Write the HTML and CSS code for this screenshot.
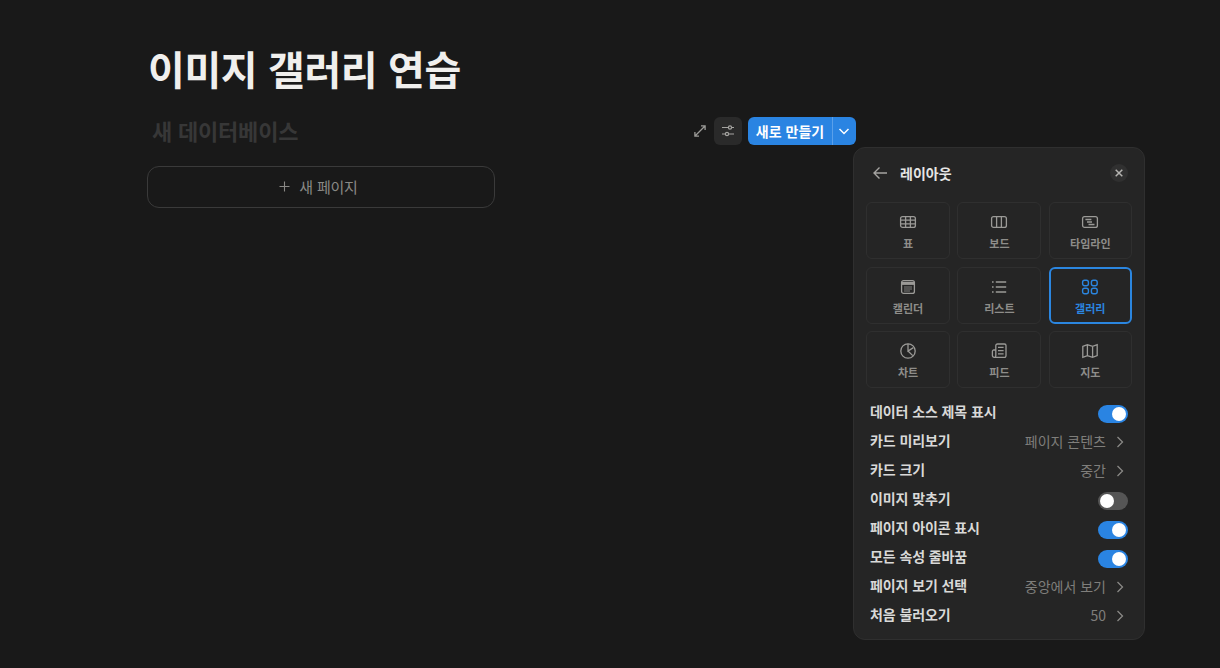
FILE: index.html
```html
<!DOCTYPE html>
<html lang="ko">
<head>
<meta charset="utf-8">
<title>이미지 갤러리 연습</title>
<link rel="stylesheet" href="styles.css">
</head>
<body>
<main class="page">
  <h1 class="title">이미지 갤러리 연습</h1>
  <div class="toolbar">
    <div class="db-name">새 데이터베이스</div>
    <div class="actions">
      <button class="icon-btn"><svg width="14" height="14" viewBox="0 0 14 14" fill="none" stroke="#9b9a97" stroke-width="1.3"><path d="M2.5 11.5l9-9M8 1.9h4.1V6M6 12.1H1.9V8"/></svg></button>
      <button class="icon-btn filled"><svg width="16" height="16" viewBox="0 0 16 16" fill="none" stroke="#a5a4a1" stroke-width="1.2"><path d="M2 4.5h12M2 11h12"/><circle cx="10" cy="4.5" r="1.6" fill="#2a2a2a"/><circle cx="7" cy="11" r="1.6" fill="#2a2a2a"/></svg></button>
      <div class="new-btn">
        <span class="new-label">새로 만들기</span>
        <span class="new-caret"><svg width="12" height="12" viewBox="0 0 12 12" fill="none" stroke="#fff" stroke-width="1.5"><path d="M1.5 4l4.5 4.5L10.5 4"/></svg></span>
      </div>
    </div>
  </div>
  <button class="new-page"><svg width="11" height="11" viewBox="0 0 11 11" stroke="#8a8986" stroke-width="1.1"><path d="M5.5.5v10M.5 5.5h10"/></svg><span>새 페이지</span></button>
</main>

<aside class="panel">
  <header class="panel-head">
    <svg class="back" width="16" height="16" viewBox="0 0 16 16" fill="none" stroke="#a5a4a1" stroke-width="1.4"><path d="M15 8H2M7.5 2.5 2 8l5.5 5.5"/></svg>
    <span class="panel-title">레이아웃</span>
    <span class="close"><svg width="8" height="8" viewBox="0 0 8 8" stroke="#b5b4b1" stroke-width="1.5"><path d="M.7.7l6.6 6.6M7.3.7.7 7.3"/></svg></span>
  </header>

  <div class="layouts">
    <div class="tile">
      <svg width="18" height="18" viewBox="0 0 18 18" fill="none" stroke="#9b9a97" stroke-width="1.3"><rect x="1.6" y="3.6" width="14.8" height="10.8" rx="2"/><path d="M1.6 7.2h14.8M1.6 10.8h14.8M6.6 3.6v10.8M11.4 3.6v10.8"/></svg>
      <span>표</span>
    </div>
    <div class="tile">
      <svg width="18" height="18" viewBox="0 0 18 18" fill="none" stroke="#9b9a97" stroke-width="1.3"><rect x="1.6" y="3.6" width="14.8" height="10.8" rx="2"/><path d="M6.6 3.6v10.8M11.4 3.6v10.8"/></svg>
      <span>보드</span>
    </div>
    <div class="tile">
      <svg width="18" height="18" viewBox="0 0 18 18" fill="none" stroke="#9b9a97" stroke-width="1.3"><rect x="1.6" y="3.6" width="14.8" height="10.8" rx="2"/><path d="M4.4 6.5h6M6 9h5M7.5 11.5h6"/></svg>
      <span>타임라인</span>
    </div>
    <div class="tile">
      <svg width="18" height="18" viewBox="0 0 18 18" fill="none" stroke="#9b9a97" stroke-width="1.3"><rect x="2.6" y="2.6" width="12.8" height="12.8" rx="2"/><path d="M2.6 5.4h12.8" stroke-width="3"/><path d="M5.5 9h7M5.5 11h7M5.5 13h5" stroke-dasharray="1 1"/></svg>
      <span>캘린더</span>
    </div>
    <div class="tile">
      <svg width="18" height="18" viewBox="0 0 18 18" fill="none" stroke="#9b9a97" stroke-width="1.3"><path d="M5.8 4h10.4M5.8 9h10.4M5.8 14h10.4"/><path d="M2 4h1.6M2 9h1.6M2 14h1.6" stroke-width="1.7"/></svg>
      <span>리스트</span>
    </div>
    <div class="tile active">
      <svg width="18" height="18" viewBox="0 0 18 18" fill="none" stroke="#2b86e0" stroke-width="1.4"><rect x="1.6" y="2.2" width="5.8" height="5.6" rx="2"/><rect x="10.4" y="2.2" width="5.8" height="5.6" rx="2"/><rect x="1.6" y="10.2" width="5.8" height="5.6" rx="2"/><rect x="10.4" y="10.2" width="5.8" height="5.6" rx="2"/></svg>
      <span>갤러리</span>
    </div>
    <div class="tile">
      <svg width="18" height="18" viewBox="0 0 18 18" fill="none" stroke="#9b9a97" stroke-width="1.3"><circle cx="9" cy="9" r="7.2"/><path d="M9 1.8V9l5.4-3.4M9 9l4.8 4.6"/></svg>
      <span>차트</span>
    </div>
    <div class="tile">
      <svg width="18" height="18" viewBox="0 0 18 18" fill="none" stroke="#9b9a97" stroke-width="1.3"><path d="M5 15.4h9.4a1.6 1.6 0 0 0 1.6-1.6V3.6A1.6 1.6 0 0 0 14.4 2H7.4a1.6 1.6 0 0 0-1.6 1.6v10.2a1.6 1.6 0 0 1-1.6 1.6 1.8 1.8 0 0 1-1.8-1.8V9.4a1.4 1.4 0 0 1 1.4-1.4h2.2"/><path d="M8 5.4h5.6M8 8.6h5.6M8 11.8h5.6"/></svg>
      <span>피드</span>
    </div>
    <div class="tile">
      <svg width="18" height="18" viewBox="0 0 18 18" fill="none" stroke="#9b9a97" stroke-width="1.3"><path d="M1.8 4.4 6.4 2.6l5.2 1.8 4.6-1.8v11l-4.6 1.8-5.2-1.8-4.6 1.8zM6.4 2.6v11M11.6 4.4v11"/></svg>
      <span>지도</span>
    </div>
  </div>

  <ul class="settings">
    <li class="row"><span class="label">데이터 소스 제목 표시</span><span class="switch on"></span></li>
    <li class="row"><span class="label">카드 미리보기</span><span class="value">페이지 콘텐츠<svg class="chev" width="8" height="12" viewBox="0 0 8 12" fill="none" stroke="#8a8986" stroke-width="1.3"><path d="M1.5 1l5 5-5 5"/></svg></span></li>
    <li class="row"><span class="label">카드 크기</span><span class="value">중간<svg class="chev" width="8" height="12" viewBox="0 0 8 12" fill="none" stroke="#8a8986" stroke-width="1.3"><path d="M1.5 1l5 5-5 5"/></svg></span></li>
    <li class="row"><span class="label">이미지 맞추기</span><span class="switch"></span></li>
    <li class="row"><span class="label">페이지 아이콘 표시</span><span class="switch on"></span></li>
    <li class="row"><span class="label">모든 속성 줄바꿈</span><span class="switch on"></span></li>
    <li class="row"><span class="label">페이지 보기 선택</span><span class="value">중앙에서 보기<svg class="chev" width="8" height="12" viewBox="0 0 8 12" fill="none" stroke="#8a8986" stroke-width="1.3"><path d="M1.5 1l5 5-5 5"/></svg></span></li>
    <li class="row"><span class="label">처음 불러오기</span><span class="value">50<svg class="chev" width="8" height="12" viewBox="0 0 8 12" fill="none" stroke="#8a8986" stroke-width="1.3"><path d="M1.5 1l5 5-5 5"/></svg></span></li>
  </ul>
</aside>
</body>
</html>
```
FILE: styles.css
```css
* { box-sizing: border-box; }
html, body { margin: 0; height: 100%; }
body {
  background: #191919;
  color: #e6e6e5;
  font-family: "Noto Sans CJK KR", "Noto Sans", sans-serif;
  overflow: hidden;
  position: relative;
}
button { font: inherit; border: 0; padding: 0; background: none; color: inherit; }
.page { width: 708px; margin-left: 148px; padding-top: 38px; }
.title { margin: 0; font-size: 40px; line-height: 60px; font-weight: 700; color: #f0efed; letter-spacing: -0.4px; }
.toolbar { display: flex; align-items: center; justify-content: space-between; margin-top: 19px; height: 28px; }
.db-name { margin-left: 4px; margin-bottom: 2px; font-size: 22px; line-height: 28px; font-weight: 700; color: #373737; letter-spacing: -0.2px; }
.actions { display: flex; align-items: center; gap: 0; }
.icon-btn { width: 28px; height: 28px; border-radius: 6px; display: flex; align-items: center; justify-content: center; }
.icon-btn.filled { background: #2a2a2a; margin-right: 6px; }
.new-btn { display: flex; height: 28px; border-radius: 6px; background: #2a84e2; color: #fff; font-size: 14px; font-weight: 700; }
.new-label { width: 85px; line-height: 28px; text-align: center; border-right: 1px solid #5aa0ea; }
.new-caret { width: 23px; padding-right: 1px; display: flex; align-items: center; justify-content: center; }
.new-page { margin-top: 21px; margin-left: -1px; width: 348px; height: 42px; padding: 0 5px 2px 0; border: 1px solid #3a3a3a; border-radius: 12px; display: flex; align-items: center; justify-content: center; gap: 9px; color: #8a8986; font-size: 15px; letter-spacing: -0.2px; }
.panel { position: absolute; left: 853px; top: 147px; width: 292px; height: 493px; background: #252525; border: 1px solid #2f2f2f; border-radius: 12px; padding: 0 12px; }
.panel-head { display: flex; align-items: center; height: 50px; padding: 0 4px 0 6px; }
.back { margin-right: 12px; }
.panel-title { flex: 1; font-size: 14px; font-weight: 700; color: #e6e6e5; }
.close { width: 18px; height: 18px; border-radius: 50%; background: #303030; display: flex; align-items: center; justify-content: center; }
.layouts { margin-top: 4px; display: grid; grid-template-columns: 84px 84px 83px; column-gap: 7.4px; row-gap: 7.5px; grid-auto-rows: 57px; }
.tile { border: 1px solid #2f2f2f; border-radius: 6px; display: flex; flex-direction: column; align-items: center; justify-content: flex-start; padding-top: 10px; gap: 3px; color: #8e8d8a; font-size: 11px; line-height: 18px; font-weight: 700; }
.tile svg { display: block; }
.tile.active { border: 2px solid #2b86e0; color: #2b86e0; padding-top: 9px; }
.settings { list-style: none; margin: 9px 0 0; padding: 0 4px; }
.row { height: 29px; display: flex; align-items: center; justify-content: space-between; }
.label { padding-bottom: 2px; font-size: 14px; font-weight: 700; color: #d9d9d8; letter-spacing: -0.1px; }
.value { display: flex; align-items: center; font-size: 14px; color: #7f7e7b; }
.chev { margin: 2px 4px 0 10px; }
.switch { width: 30px; height: 18px; margin-top: 4px; border-radius: 9px; background: #555; position: relative; }
.switch::after { content: ""; position: absolute; left: 2px; top: 2px; width: 14px; height: 14px; border-radius: 50%; background: #fff; }
.switch.on { background: #2a84e2; }
.switch.on::after { left: 14px; }
```
